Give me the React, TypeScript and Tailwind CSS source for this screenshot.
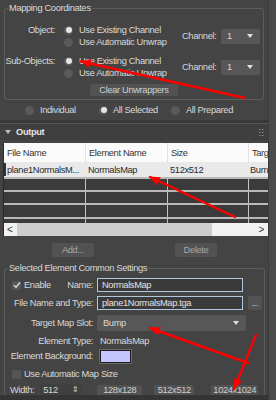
import React from "react";

function Radio({ on }: { on?: boolean }) {
  return (
    <span className="w-[9px] h-[9px] rounded-full bg-[#5a5a5a] flex items-center justify-center shrink-0">
      {on && <span className="w-[6px] h-[6px] rounded-full bg-[#e6e6e6]" />}
    </span>
  );
}

function Caret() {
  return (
    <svg width="6" height="4" viewBox="0 0 6 4" className="shrink-0">
      <path d="M0 0 L6 0 L3 4 Z" fill="#e0e0e0" />
    </svg>
  );
}

function Select({ value, className }: { value: string; className: string }) {
  return (
    <div className={`flex items-center justify-between bg-[#575757] rounded-[2px] pl-[6px] pr-[7px] ${className}`}>
      <span>{value}</span>
      <Caret />
    </div>
  );
}

function Check({ on }: { on?: boolean }) {
  return (
    <span className="w-[9px] h-[9px] bg-[#555] rounded-[1px] flex items-center justify-center shrink-0">
      {on && (
        <svg width="8" height="8" viewBox="0 0 8 8">
          <path d="M1 4.2 L3 6.3 L7 1.5" stroke="#dcdcdc" strokeWidth="1.4" fill="none" />
        </svg>
      )}
    </span>
  );
}

function Btn({ children, className }: { children: React.ReactNode; className: string }) {
  return (
    <div className={`flex items-center justify-center rounded-[2px] bg-[#525252] ${className}`}>
      {children}
    </div>
  );
}

function Input({ value, className }: { value: string; className: string }) {
  return (
    <div className={`flex items-center border border-[#afc8e0] bg-[#3a3a3a] pl-[4px] text-[#e2e2e2] ${className}`}>
      {value}
    </div>
  );
}

const cols = "grid grid-cols-[81px_82px_81px_1fr]";

export default function App() {
  return (
    <div className="relative w-[276px] h-[400px] overflow-hidden flex bg-[#393939] text-[#d9d9d9] text-[9.3px] leading-[12px] tracking-[-0.35px] font-['Liberation_Sans',Arial,sans-serif]">
      <div className="w-[268px] flex flex-col">
        {/* Mapping coordinates rollout */}
        <div className="h-[120px] bg-[#444] pt-[2px]">
          <fieldset className="mx-[4px] w-[260px] border border-[#5d5d5d] rounded-[3px] pb-[3px]">
            <legend className="ml-[3px] px-[1px] leading-[12px]">Mapping Coordinates</legend>
            <div className="flex mt-[10px]">
              <div className="w-[50px] flex justify-end whitespace-nowrap">Object:</div>
              <div className="ml-[9px] w-[118px] flex flex-col">
                <div className="flex items-center h-[12px] gap-[6px]"><Radio on />Use Existing Channel</div>
                <div className="flex items-center h-[12px] gap-[6px]"><Radio />Use Automatic Unwrap</div>
              </div>
              <div className="flex items-center">
                <span className="w-[39px]">Channel:</span>
                <Select value="1" className="w-[39px] h-[15px]" />
              </div>
            </div>
            <div className="flex mt-[7px]">
              <div className="w-[50px] flex justify-end whitespace-nowrap">Sub-Objects:</div>
              <div className="ml-[9px] w-[118px] flex flex-col">
                <div className="flex items-center h-[12px] gap-[6px]"><Radio on />Use Existing Channel</div>
                <div className="flex items-center h-[12px] gap-[6px]"><Radio />Use Automatic Unwrap</div>
              </div>
              <div className="flex items-center">
                <span className="w-[39px]">Channel:</span>
                <Select value="1" className="w-[39px] h-[15px]" />
              </div>
            </div>
            <div className="flex justify-center mt-[5px]">
              <Btn className="w-[88px] h-[12px] text-[#cfcfcf]">Clear Unwrappers</Btn>
            </div>
          </fieldset>
          <div className="flex items-center h-[12px] mt-[4px] pl-[25px]">
            <div className="w-[74px] flex items-center gap-[6px]"><Radio />Individual</div>
            <div className="w-[72px] flex items-center gap-[5px]"><Radio on />All Selected</div>
            <div className="flex items-center gap-[6px]"><Radio />All Prepared</div>
          </div>
        </div>

        {/* Output rollout */}
        <div className="mt-[3px] h-[272px] bg-[#444] overflow-hidden flex flex-col">
          <div className="h-[17px] shrink-0 flex items-center bg-[#3f3f3f] border-t border-[#555] pl-[5px] pr-[4px]">
            <svg width="6" height="4" viewBox="0 0 6 4"><path d="M0 0 L6 0 L3 4 Z" fill="#bdbdbd" /></svg>
            <span className="ml-[5px] font-bold text-[#e4e4e4]">Output</span>
            <svg width="5" height="7" viewBox="0 0 5 7" className="ml-auto">
              {[0, 3].map((x) =>
                [0, 3, 6].map((y) => <rect key={`${x}-${y}`} x={x} y={y} width="1.5" height="1" fill="#8a8a8a" />)
              )}
            </svg>
          </div>

          {/* element list */}
          <div className="mt-[3px] ml-[3px] w-[265px] shrink-0 border-l border-[#2a2a2a]">
            <div className={`${cols} h-[19px] bg-[#fbfbfb] text-[#333]`}>
              <div className="flex items-center pl-[3px]">File Name</div>
              <div className="flex items-center pl-[3px] border-l border-[#e2e2e2]">Element Name</div>
              <div className="flex items-center pl-[3px] border-l border-[#e2e2e2]">Size</div>
              <div className="flex items-center pl-[3px] border-l border-[#e2e2e2] overflow-hidden whitespace-nowrap">Target</div>
            </div>
            <div className={`${cols} h-[15px] bg-[#e9e9ea] text-[#2a2a2a]`}>
              <div className="flex items-center">
                <span className="w-[2px] h-[13px] bg-[#333] mr-[1px]" />
                <span className="whitespace-nowrap overflow-hidden">plane1NormalsM...</span>
              </div>
              <div className="flex items-center pl-[3px]">NormalsMap</div>
              <div className="flex items-center pl-[3px]">512x512</div>
              <div className="flex items-center pl-[2px] overflow-hidden whitespace-nowrap">Bump</div>
            </div>
            {[13, 13, 14, 6].map((h, i) => (
              <div key={i} className={`${cols} bg-[#3b3b3b] border-t-2 border-[#b9b9b9]`} style={{ height: h }}>
                <div />
                <div className="border-l border-[#c4c4c4]" />
                <div className="border-l border-[#c4c4c4]" />
                <div className="border-l border-[#c4c4c4]" />
              </div>
            ))}
            <div className="h-[13px] flex items-center bg-[#f2f2f2] text-[#333]">
              <span className="w-[12px] pl-[3px] text-[10px] leading-[13px]">&lt;</span>
              <span className="ml-[1px] w-[195px] h-[13px] bg-[#cdcdcd]" />
              <span className="ml-auto pr-[4px] text-[10px] leading-[13px]">&gt;</span>
            </div>
          </div>

          <div className="flex mt-[7px] h-[14px] shrink-0">
            <Btn className="ml-[52px] w-[42px] h-[14px] text-[#a8a8a8]">Add...</Btn>
            <Btn className="ml-[81px] w-[42px] h-[14px] text-[#a8a8a8]">Delete</Btn>
          </div>

          <fieldset className="mt-[5px] mx-[4px] w-[261px] border border-[#5d5d5d] rounded-[3px]">
            <legend className="ml-[3px] px-[1px] leading-[12px]">Selected Element Common Settings</legend>
            <div className="flex items-center h-[14px] mt-[4px]">
              <div className="w-[88px] flex items-center">
                <span className="pl-[7px]"><Check on /></span>
                <span className="ml-[3px]">Enable</span>
                <span className="ml-auto">Name:</span>
              </div>
              <Input value="NormalsMap" className="ml-[4px] w-[146px] h-[14px]" />
            </div>
            <div className="flex items-center h-[14px] mt-[4px]">
              <div className="w-[88px] flex justify-end whitespace-nowrap">File Name and Type:</div>
              <Input value="plane1NormalsMap.tga" className="ml-[4px] w-[146px] h-[14px]" />
              <Btn className="ml-[5px] w-[14px] h-[14px] text-[#cfcfcf]">...</Btn>
            </div>
            <div className="flex items-center h-[16px] mt-[5px]">
              <div className="w-[88px] flex justify-end whitespace-nowrap">Target Map Slot:</div>
              <Select value="Bump" className="ml-[4px] w-[149px] h-[16px]" />
            </div>
            <div className="flex items-center h-[14px] mt-[3px]">
              <div className="w-[88px] flex justify-end whitespace-nowrap">Element Type:</div>
              <span className="ml-[7px]">NormalsMap</span>
            </div>
            <div className="flex items-center h-[14px] mt-[1px]">
              <div className="w-[88px] flex justify-end whitespace-nowrap">Element Background:</div>
              <span className="ml-[7px] w-[31px] h-[13px] bg-[#c4c4ff] border border-[#1e1e1e] outline outline-1 outline-[#6a6a6a]" />
            </div>
            <div className="flex items-center h-[14px] mt-[4px] pl-[7px]">
              <Check />
              <span className="ml-[3px]">Use Automatic Map Size</span>
            </div>
            <div className="flex items-center h-[14px] mt-[2px]">
              <span className="ml-[5px]">Width:</span>
              <div className="ml-[6px] w-[42px] h-[12px] flex items-center bg-[#404040] pl-[3px] pr-[4px]">
                <span>512</span>
                <span className="ml-auto text-[8px]">⇕</span>
              </div>
              <Btn className="ml-[15px] w-[45px] h-[11px] text-[#cfcfcf]">128x128</Btn>
              <Btn className="ml-[12px] w-[40px] h-[11px] text-[#cfcfcf]">512x512</Btn>
              <Btn className="ml-[17px] w-[47px] h-[11px] text-[#cfcfcf]">1024x1024</Btn>
            </div>
          </fieldset>
        </div>
        <div className="flex-1 bg-[#353535]" />
      </div>

      {/* panel scrollbar */}
      <div className="w-[8px] bg-[#4b4b4b] border-l border-[#3a3a3a]" />

      {/* red annotation arrows */}
      <svg className="absolute inset-0 pointer-events-none" width="276" height="400" viewBox="0 0 276 400">
        <defs>
          <marker id="ah" markerUnits="userSpaceOnUse" markerWidth="11" markerHeight="9" refX="10" refY="4.5" orient="auto">
            <path d="M0 0 L11 4.5 L0 9 Z" fill="#ff0000" />
          </marker>
        </defs>
        <g stroke="#ff0000" strokeWidth="2.4" strokeLinecap="round">
          <line x1="245" y1="98" x2="81" y2="61.5" markerEnd="url(#ah)" />
          <line x1="235" y1="217" x2="150" y2="177" markerEnd="url(#ah)" />
          <line x1="248" y1="363" x2="150" y2="328" markerEnd="url(#ah)" />
          <line x1="256" y1="335" x2="234" y2="389" markerEnd="url(#ah)" />
        </g>
      </svg>
    </div>
  );
}
